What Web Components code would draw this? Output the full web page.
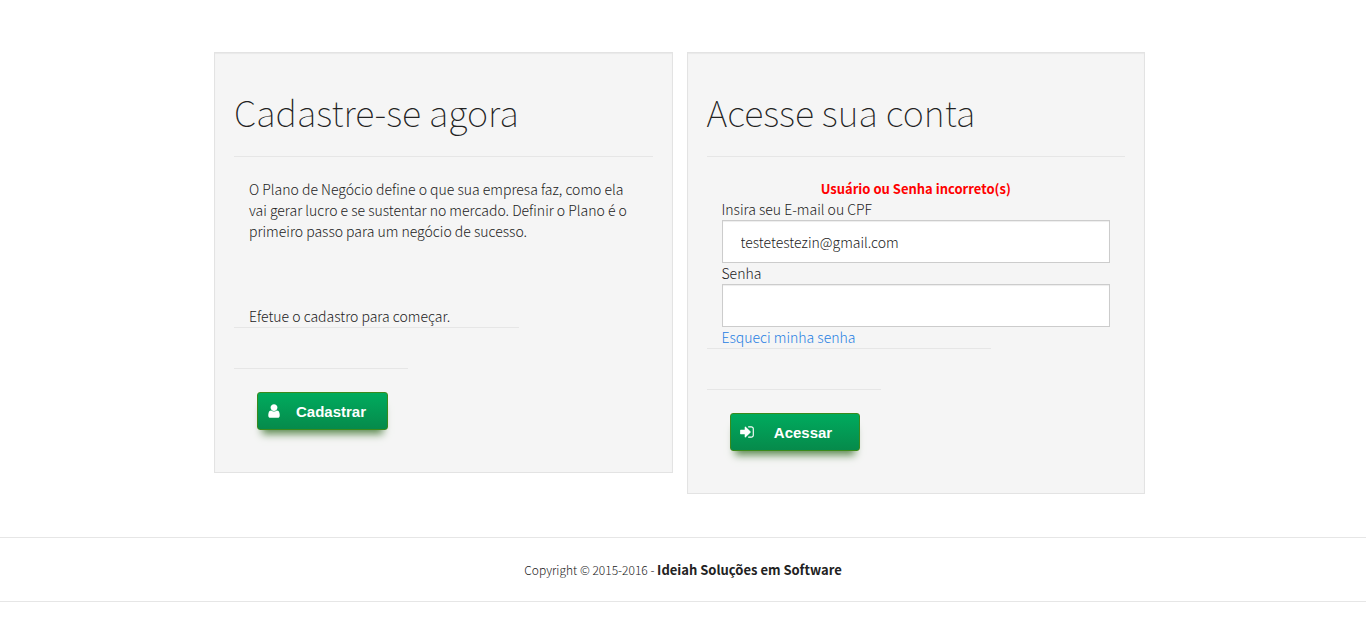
<!DOCTYPE html>
<html lang="pt-BR">
<head>
<meta charset="utf-8">
<title>Plano de Negócio</title>
<style>
  body {
    margin: 0;
    background: #fff;
    color: #222;
    font-family: "Noto Sans CJK SC", "Noto Sans", sans-serif;
    font-size: 14px;
    font-weight: 300;
    line-height: 21px;
  }
</style>
</head>
<body>
<account-page></account-page>
<script>
const define = (name, html, setup) => {
  const template = document.createElement('template');
  template.innerHTML = html;
  customElements.define(name, class extends HTMLElement {
    constructor() {
      super();
      this.attachShadow({ mode: 'open' }).append(template.content.cloneNode(true));
    }
    connectedCallback() {
      if (setup) setup(this, this.shadowRoot);
    }
  });
};

const icons = {
  user: 'M1536 1399q0 109-62.5 187t-150.5 78h-854q-88 0-150.5-78t-62.5-187q0-85 8.5-160.5t31.5-152 58.5-131 94-89 134.5-34.5q131 128 313 128t313-128q76 0 134.5 34.5t94 89 58.5 131 31.5 152 8.5 160.5zm-256-887q0 159-112.5 271.5t-271.5 112.5-271.5-112.5-112.5-271.5 112.5-271.5 271.5-112.5 271.5 112.5 112.5 271.5z',
  enter: 'M1312 896q0 26-19 45l-544 544q-19 19-45 19t-45-19-19-45v-288h-448q-26 0-45-19t-19-45v-384q0-26 19-45t45-19h448v-288q0-26 19-45t45-19 45 19l544 544q19 19 19 45zm352-352v704q0 119-84.5 203.5t-203.5 84.5h-320q-13 0-22.5-9.5t-9.5-22.5q0-4-1-20t-.5-26.5 3-23.5 10-19.5 20.5-6.5h320q66 0 113-47t47-113v-704q0-66-47-113t-113-47h-312l-11.5-1-11.5-3-8-5.5-7-9-2-13.5q0-4-1-20t-.5-26.5 3-23.5 10-19.5 20.5-6.5h320q119 0 203.5 84.5t84.5 203.5z'
};

define('action-button', `
  <style>
    :host { display: block; }
    button {
      display: flex; align-items: center; box-sizing: border-box;
      min-width: 130px; height: 38px; padding: 0 21px 0 8px;
      border: 1px solid #3b8a1c; border-radius: 3px;
      background: linear-gradient(#00ab5e, #068a4b);
      box-shadow: 0 9px 8px -5px #5d8a50;
      color: #fff; cursor: pointer;
      font: bold 15px/21px "Liberation Sans", Arial, sans-serif;
    }
    svg { width: 16px; height: 16px; fill: currentColor; flex: none; }
    span { flex: 1; padding-left: 14px; text-align: center; }
  </style>
  <button type="button"><svg viewBox="0 0 1792 1792" aria-hidden="true"><path/></svg><span><slot></slot></span></button>
`, (host, root) => root.querySelector('path').setAttribute('d', icons[host.getAttribute('icon')]));

define('text-field', `
  <style>
    :host { display: block; }
    label { display: block; }
    input {
      display: block; box-sizing: border-box; width: 100%; height: 43px; margin: 0;
      padding: 10px 18px; border: 1px solid #ccc; border-radius: 0;
      background: #fff; color: inherit; font: inherit; outline: 0;
      box-shadow: inset 0 1px 1px rgba(0, 0, 0, .075);
    }
  </style>
  <label for="field"></label>
  <input id="field">
`, (host, root) => {
  const input = root.querySelector('input');
  root.querySelector('label').textContent = host.getAttribute('label');
  input.type = host.getAttribute('type');
  input.value = host.getAttribute('value') || '';
});

define('panel-card', `
  <style>
    :host {
      display: block; box-sizing: border-box; padding: 19px 19px 42px;
      border: 1px solid #e3e3e3; background: #f5f5f5;
      box-shadow: inset 0 1px 1px rgba(0, 0, 0, .05);
    }
    h1 {
      margin: 0 0 21px; padding: 17px 0 23px; border-bottom: 1px solid #e6e6e6;
      font-size: 36px; line-height: 44px; font-weight: 100;
    }
    .body { padding: 0 15px; }
    .rule { width: 68%; border-top: 1px solid #e6e6e6; }
    .rule.short { width: 174px; margin: 40px 0 23px; }
    .action { padding-left: 23px; }
  </style>
  <h1><slot name="title"></slot></h1>
  <div class="body"><slot></slot></div>
  <div class="rule"></div>
  <div class="rule short"></div>
  <div class="action"><slot name="action"></slot></div>
`);

define('signup-intro', `
  <style>
    :host { display: block; padding-top: 1px; }
    p { margin: 0; }
    p + p { margin-top: 64px; }
  </style>
  <p>O Plano de Negócio define o que sua empresa faz, como ela vai gerar lucro e se sustentar no mercado. Definir o Plano é o primeiro passo para um negócio de sucesso.</p>
  <p>Efetue o cadastro para começar.</p>
`);

define('login-form', `
  <style>
    :host { display: block; }
    .error { margin: 0; color: #f00; font-size: 13px; font-weight: 700; text-align: center; }
    a { display: block; color: #2780e3; text-decoration: none; }
  </style>
  <p class="error" role="alert">Usuário ou Senha incorreto(s)</p>
  <text-field label="Insira seu E-mail ou CPF" type="text" value="testetestezin@gmail.com"></text-field>
  <text-field label="Senha" type="password"></text-field>
  <a href="#senha">Esqueci minha senha</a>
`);

define('page-footer', `
  <style>
    :host { display: block; }
    footer {
      padding: 21px 0; text-align: center;
      border-top: 1px solid #e6e6e6; border-bottom: 1px solid #e6e6e6;
    }
    small { font-size: 12px; }
    strong { font-size: 13px; font-weight: 700; }
  </style>
  <footer><small>Copyright © 2015-2016 - </small><strong>Ideiah Soluções em Software</strong></footer>
`);

define('account-page', `
  <style>
    :host { display: block; }
    main {
      display: grid; grid-template-columns: 1fr 1fr; gap: 14px; align-items: start;
      box-sizing: border-box; max-width: 938px; margin: 0 auto; padding: 52px 7px 43px 0;
    }
    @media (max-width: 760px) {
      main { grid-template-columns: 1fr; padding: 20px; }
    }
  </style>
  <main>
    <panel-card>
      <span slot="title">Cadastre-se agora</span>
      <signup-intro></signup-intro>
      <action-button slot="action" icon="user">Cadastrar</action-button>
    </panel-card>
    <panel-card>
      <span slot="title">Acesse sua conta</span>
      <login-form></login-form>
      <action-button slot="action" icon="enter">Acessar</action-button>
    </panel-card>
  </main>
  <page-footer></page-footer>
`);
</script>
</body>
</html>
